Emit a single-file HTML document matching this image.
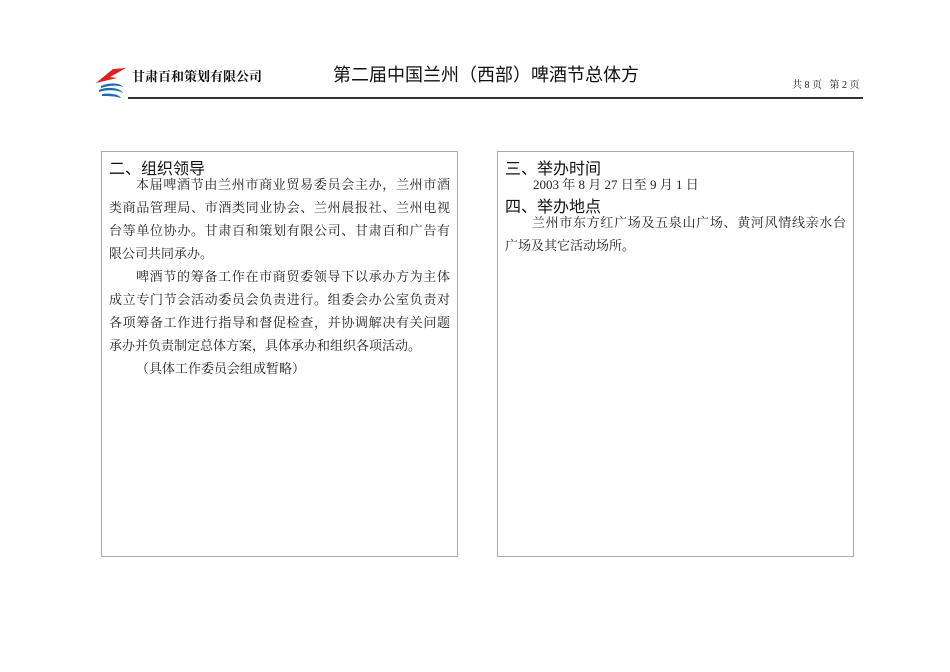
<html><head><style>
body{margin:0;width:950px;height:672px;background:#fff;position:relative;font-family:"Liberation Serif","Noto Serif CJK SC",serif;color:#222}
.a{position:absolute;white-space:nowrap}
.box{position:absolute;border:1px solid #aaa;top:151px;width:355px;height:404px}
.h{font-family:"Liberation Sans","Noto Sans CJK SC",sans-serif;font-size:16px;color:#111}
.p{font-size:13px;line-height:23px}
.j{text-align:justify;text-align-last:justify;width:341px}
.j.i{margin-left:27px;width:314px}
</style></head><body>
<svg class="a" style="left:93px;top:66px" width="36" height="36" viewBox="0 0 36 36">
<path d="M3 17 L20 3 L33 2 L17 11 L24 12 Z" fill="#e02020"/>
<path d="M8 20 C16 16 28 17 30 21 C26 19 16 19 8 22Z" fill="#1a6ab0"/>
<path d="M6 24 C14 20 28 22 30 27 C26 24 14 23 6 26Z" fill="#1a6ab0"/>
<path d="M9 28 C16 27 26 28 28 32 C22 30 14 30 9 30Z" fill="#1a6ab0"/>
</svg>
<div class="a" style="left:132px;top:66px;font-size:13px;font-weight:bold;color:#111">甘肃百和策划有限公司</div>
<div class="a" style="left:333px;top:61px;font-size:18px;font-family:'Liberation Sans','Noto Sans CJK SC',sans-serif;color:#111">第二届中国兰州（西部）啤酒节总体方</div>
<div class="a" style="left:792px;top:76px;font-size:10px">共 8 页&nbsp;&nbsp;&nbsp;第 2 页</div>
<div class="a" style="left:128px;top:97px;width:735px;height:2px;background:#333"></div>
<div class="box" style="left:101px"></div>
<div class="box" style="left:497px"></div>
<div class="a h" style="left:109px;top:155px">二、组织领导</div>
<div class="a p" style="left:109px;top:173px">
<div class="j i">本届啤酒节由兰州市商业贸易委员会主办，兰州市酒</div>
<div class="j">类商品管理局、市酒类同业协会、兰州晨报社、兰州电视</div>
<div class="j">台等单位协办。甘肃百和策划有限公司、甘肃百和广告有</div>
<div>限公司共同承办。</div>
<div class="j i">啤酒节的筹备工作在市商贸委领导下以承办方为主体</div>
<div class="j">成立专门节会活动委员会负责进行。组委会办公室负责对</div>
<div class="j">各项筹备工作进行指导和督促检查，并协调解决有关问题</div>
<div>承办并负责制定总体方案，具体承办和组织各项活动。</div>
<div style="margin-left:27px">（具体工作委员会组成暂略）</div>
</div>
<div class="a h" style="left:505px;top:155px">三、举办时间</div>
<div class="a p" style="left:533px;top:173px">2003 年 8 月 27 日至 9 月 1 日</div>
<div class="a h" style="left:505px;top:193px">四、举办地点</div>
<div class="a p" style="left:505px;top:211px">
<div class="j i">兰州市东方红广场及五泉山广场、黄河风情线亲水台</div>
<div>广场及其它活动场所。</div>
</div>
</body></html>
